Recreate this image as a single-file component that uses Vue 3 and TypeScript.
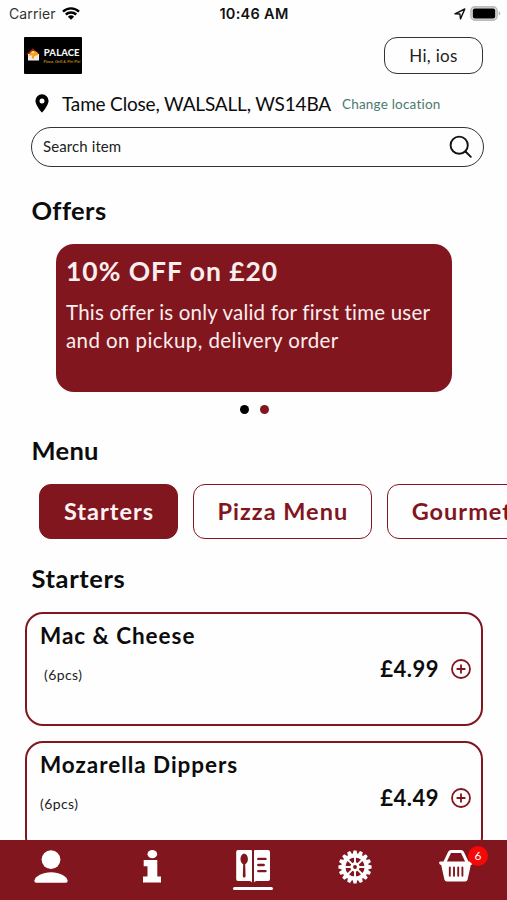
<script setup lang="ts">
interface MenuItem {
  name: string
  portion: string
  price: string
  inset: boolean
}

const categories: string[] = ['Starters', 'Pizza Menu', 'Gourmet']
const activeCategory = 'Starters'

const items: MenuItem[] = [
  { name: 'Mac & Cheese', portion: '(6pcs)', price: '£4.99', inset: true },
  { name: 'Mozarella Dippers', portion: '(6pcs)', price: '£4.49', inset: false },
]

const teeth: number[] = Array.from({ length: 16 }, (_, i) => i * 22.5)
const spokes: number[] = Array.from({ length: 8 }, (_, i) => i * 45)
</script>

<template>
  <div class="app">
    <header class="status">
      <div class="carrier">
        <span class="carrier-name">Carrier</span>
        <svg class="wifi" viewBox="0 0 18 13" width="18" height="13">
          <path d="M1 4.6a11.6 11.6 0 0 1 16 0M3.8 7.5a7.6 7.6 0 0 1 10.4 0" fill="none" stroke="#000" stroke-width="2.4" />
          <path d="M9 12.8 5.9 9.7a4.5 4.5 0 0 1 6.2 0z" />
        </svg>
      </div>
      <span class="clock">10:46 AM</span>
      <div class="indicators">
        <svg viewBox="0 0 12 12" width="12" height="12">
          <path d="M.9 5.8 10.8 1 6.5 10.9 5.9 6z" fill="none" stroke="#111" stroke-width="1.4" stroke-linejoin="round" />
        </svg>
        <svg viewBox="0 0 31 15" width="31" height="15">
          <rect x=".9" y=".9" width="26.2" height="13.2" rx="4" fill="#e4e4e4" stroke="#bcbcbc" stroke-width="1.6" />
          <rect x="2.8" y="2.6" width="22.4" height="9.8" rx="2" />
          <path d="M28.7 5v4.6q1.6-.7 1.6-2.3T28.7 5z" fill="#b5b5b5" />
        </svg>
      </div>
    </header>

    <main class="content">
      <div class="brand-row">
        <svg class="logo" viewBox="0 0 58 37" width="58" height="37">
          <rect width="58" height="37" rx="1" />
          <path d="M2 17.5 8.7 11.5 16 17.5z" fill="#a51e22" />
          <path d="M4 17h11v6.5H4z" fill="#f4e9e4" />
          <path d="M5 18.5q1.5-5 5-4.500 4.500.5 4 4l-3.500 1-1 3-2-1 1-2.500z" fill="#f0a021" />
          <circle cx="9" cy="15.2" r="1.3" fill="#ffd94a" />
          <text class="logo-name" x="19.8" y="18.5">PALACE</text>
          <text class="logo-tag" x="19.5" y="25.5">Pizza, Grill &amp; Piri Piri</text>
        </svg>
        <button class="greeting">Hi, ios</button>
      </div>

      <div class="location">
        <svg viewBox="0 0 14 19" width="14" height="19">
          <path fill-rule="evenodd" d="M7 .3A6.5 6.5 0 0 0 .4 6.8C.4 11.5 7 18.7 7 18.7s6.6-7.2 6.6-11.9A6.5 6.5 0 0 0 7 .3zm0 4.1a2.5 2.5 0 1 1 0 5 2.5 2.5 0 0 1 0-5z" />
        </svg>
        <span class="address">Tame Close, WALSALL, WS14BA</span>
        <a class="change">Change location</a>
      </div>

      <div class="search">
        <span class="placeholder">Search item</span>
        <svg viewBox="0 0 24 24" width="24" height="24" fill="none" stroke="#111" stroke-width="1.9" stroke-linecap="round">
          <circle cx="10.2" cy="10.2" r="8.6" />
          <path d="m16.5 16.5 5.3 5.3" />
        </svg>
      </div>

      <h2 class="offers-title">Offers</h2>
      <section class="offer">
        <h3>10% OFF on £20</h3>
        <p>This offer is only valid for first time user<br /><span class="second-line">and on pickup, delivery order</span></p>
      </section>
      <div class="dots"><i></i><i class="current"></i></div>

      <h2 class="menu-title">Menu</h2>
      <div class="chips">
        <button v-for="c in categories" :key="c" class="chip" :class="{ active: c === activeCategory }">{{ c }}</button>
      </div>

      <h2 class="section-title">Starters</h2>
      <article v-for="item in items" :key="item.name" class="item">
        <h4>{{ item.name }}</h4>
        <div class="item-row">
          <span class="portion" :class="{ inset: item.inset }">{{ item.portion }}</span>
          <span class="price">{{ item.price }}</span>
          <svg viewBox="0 0 20 20" width="20" height="20" fill="none" stroke="#82161f" stroke-width="1.8">
            <circle cx="10" cy="10" r="9" />
            <path d="M10 5.600v8.800M5.600 10h8.800" />
          </svg>
        </div>
      </article>
    </main>

    <nav class="tabs">
      <a class="tab">
        <svg viewBox="0 0 36 34" width="36" height="34" fill="#fff">
          <circle cx="18" cy="9.6" r="9.4" />
          <path d="M1.400 30.500C2.500 26 9.500 22.300 18 22.300S33.500 26 34.600 30.500Q34.800 32.700 32.800 32.700H3.200Q1.200 32.700 1.400 30.500z" />
        </svg>
      </a>
      <a class="tab">
        <svg viewBox="0 0 18 34" width="18" height="34" fill="#fff">
          <ellipse cx="9.3" cy="4.2" rx="4.8" ry="4.1" />
          <path d="M.7 10h13.600v16.600H18v6H0v-6h4.500V16.300H.7z" />
        </svg>
      </a>
      <a class="tab selected">
        <svg viewBox="0 0 34 34" width="34" height="34" fill="#fff">
          <path fill-rule="evenodd" d="M2 0h13q1 0 1 1v31.400Q15 31 13 31H2Q.2 31 .2 29V2Q.2 0 2 0zM8.200 3.800C5.800 3.800 4.500 6.500 4.500 9.300c0 2.400 1.200 4.200 2.700 4.900L6.800 26q0 1.500 1.400 1.500T9.600 26l-.4-11.800c1.500-.7 2.700-2.500 2.700-4.900 0-2.800-1.300-5.500-3.700-5.500z" />
          <path fill-rule="evenodd" d="M19 0h13q2 0 2 2v27q0 2-2 2H21q-2 0-3 1.400V1q0-1 1-1zM22.300 7.700a1.100 1.100 0 0 0 0 2.400h7.200a1.100 1.100 0 0 0 0-2.400zm0 6.100a1.100 1.100 0 0 0 0 2.400h5.400a1.100 1.100 0 0 0 0-2.400zm0 6.100a1.100 1.100 0 0 0 0 2.400h7.200a1.100 1.100 0 0 0 0-2.400z" />
        </svg>
        <span class="bar"></span>
      </a>
      <a class="tab">
        <svg viewBox="-17 -17 34 34" width="34" height="34" fill="none" stroke="#fff">
          <circle r="11.6" stroke-width="4" />
          <path v-for="a in teeth" :key="a" d="M-2.400-12.500-1.500-16.600h3l.9 4.100z" :transform="`rotate(${a})`" fill="#fff" stroke="none" />
          <path v-for="a in spokes" :key="'s' + a" d="M0-3v-8" :transform="`rotate(${a})`" stroke-width="1.9" />
          <circle r="3.3" stroke-width="2.7" />
        </svg>
      </a>
      <a class="tab">
        <svg viewBox="0 0 34 32" width="34" height="32">
          <path d="M5.500 13 10.500 2.500Q11 1.500 12 1.500h10q1 0 1.500 1L28.500 13" fill="none" stroke="#fff" stroke-width="3" />
          <path d="M1.500 11.500h31q1.700 0 1.300 1.700-.4 1.500-2 1.800L28.600 29.600q-.5 1.900-2.500 1.900H7.900q-2 0-2.500-1.900L2.200 15Q.6 14.700.2 13.200-.2 11.500 1.500 11.500z" fill="#fff" />
          <path d="M10.800 17.500v8.300M15 17.500v8.300M19.200 17.500v8.300M23.400 17.500v8.300" stroke="#82161f" stroke-width="1.9" stroke-linecap="round" />
        </svg>
        <span class="badge">6</span>
      </a>
    </nav>
  </div>
</template>

<style>
body {
  background: #fff;
}
</style>

<style scoped>
.app {
  width: 507px;
  height: 900px;
  overflow: hidden;
  display: flex;
  flex-direction: column;
  background: #fefefe;
  color: #0c0c0c;
  font-family: Lato, "Open Sans", sans-serif;
}
button {
  font-family: inherit;
  background: none;
  padding: 0;
}
h2, h3, h4, p {
  margin: 0;
}
svg {
  display: block;
  flex: none;
}
.status {
  height: 27px;
  display: grid;
  grid-template-columns: 1fr auto 1fr;
  align-items: center;
  padding: 0 6px 0 9px;
  box-sizing: border-box;
  font-family: Inter, Roboto, sans-serif;
  font-size: 14px;
}
.carrier {
  display: flex;
  align-items: center;
  gap: 6px;
  color: #333;
  letter-spacing: 0.1px;
}
.clock {
  position: relative;
  left: -1px;
  font-size: 14.5px;
  font-weight: 600;
  letter-spacing: 0.3px;
  color: #111;
}
.indicators {
  display: flex;
  align-items: center;
  justify-content: flex-end;
  gap: 4px;
}
.content {
  flex: 1;
  min-height: 0;
  overflow: hidden;
}
.brand-row {
  display: flex;
  justify-content: space-between;
  padding: 10px 24px 0;
}
.logo {
  overflow: visible;
}
.logo-name {
  font: 900 9.5px Lato, sans-serif;
  letter-spacing: 0.1px;
  fill: #f5f5f5;
}
.logo-tag {
  font: italic 4.4px Lato, sans-serif;
  fill: #e2ac1e;
}
.greeting {
  box-sizing: border-box;
  width: 99px;
  height: 37px;
  border: 1.5px solid #333;
  border-radius: 13px;
  font-size: 17px;
  letter-spacing: 0.3px;
  color: #222;
}
.location {
  display: flex;
  align-items: center;
  height: 24px;
  margin: 17.5px 0 0 35px;
}
.address {
  width: 269px;
  margin-left: 13px;
  font-size: 19px;
  letter-spacing: -0.18px;
  white-space: nowrap;
}
.change {
  margin-left: 11px;
  font-size: 13.5px;
  letter-spacing: 0.2px;
  color: #4b7a6f;
}
.search {
  box-sizing: border-box;
  width: 453px;
  height: 40px;
  margin: 11.5px 0 0 31px;
  padding: 0 10px 0 11px;
  border: 1.5px solid #333;
  border-radius: 20px;
  display: flex;
  align-items: center;
  justify-content: space-between;
  font-size: 15px;
  letter-spacing: 0.1px;
  color: #222;
}
.placeholder {
  padding-bottom: 2px;
}
h2 {
  margin-left: 31.5px;
  font-size: 25.5px;
  line-height: 30px;
  font-weight: 700;
  letter-spacing: 0.6px;
}
.offers-title {
  margin-top: 28px;
  letter-spacing: 0.4px;
}
.offer {
  box-sizing: border-box;
  width: 396px;
  height: 148px;
  margin: 19px 0 0 56px;
  padding: 11px 10px;
  border-radius: 18px;
  background: #82161f;
  color: #fbeeee;
  white-space: nowrap;
}
.offer h3 {
  font-size: 26.5px;
  line-height: 32px;
  letter-spacing: 0.95px;
}
.offer p {
  margin-top: 11px;
  font-size: 20.5px;
  line-height: 28px;
  letter-spacing: 0.2px;
}
.second-line {
  letter-spacing: 0.42px;
}
.dots {
  display: flex;
  gap: 10.5px;
  margin: 12.5px 0 0 240px;
}
.dots i {
  width: 9px;
  height: 9px;
  border-radius: 50%;
  background: #000;
}
.dots .current {
  background: #82161f;
}
.menu-title {
  margin-top: 21px;
  letter-spacing: 0.3px;
}
.chips {
  display: flex;
  gap: 14.5px;
  margin: 19px 0 0 39px;
}
.chip {
  box-sizing: border-box;
  flex: none;
  height: 55px;
  padding: 0 23px 0 24px;
  border: 1.3px solid #82161f;
  border-radius: 12px;
  color: #82161f;
  font-size: 23.5px;
  font-weight: 700;
  letter-spacing: 1px;
}
.chip.active {
  background: #82161f;
  color: #fdf3f3;
}
.section-title {
  margin-top: 24px;
}
.item {
  box-sizing: border-box;
  width: 458px;
  height: 114.5px;
  margin: 0 0 14.5px 25px;
  padding: 8px 10px 0 13px;
  border: 2.5px solid #82161f;
  border-radius: 18px;
}
.section-title + .item {
  margin-top: 19px;
}
.item h4 {
  font-size: 22.5px;
  line-height: 28px;
  letter-spacing: 0.95px;
}
.item-row {
  display: flex;
  align-items: center;
  height: 38px;
}
.portion {
  font-size: 14px;
  letter-spacing: 0.4px;
  color: #222;
  padding-top: 11px;
}
.portion.inset {
  margin-left: 4px;
}
.price {
  margin-left: auto;
  margin-right: 12px;
  font-size: 22px;
  font-weight: 700;
  letter-spacing: 0.5px;
}
.tabs {
  height: 60px;
  display: grid;
  grid-template-columns: repeat(5, 1fr);
  background: #82161f;
}
.tab {
  position: relative;
  display: flex;
  flex-direction: column;
  align-items: center;
  padding-top: 10px;
}
.bar {
  width: 40px;
  height: 3px;
  margin-top: 3px;
  border-radius: 2px;
  background: #fff;
}
.badge {
  position: absolute;
  top: 6px;
  right: 19px;
  width: 20px;
  height: 20px;
  border-radius: 50%;
  background: #f60808;
  color: #fff;
  font-size: 12px;
  line-height: 20px;
  text-align: center;
}
</style>
